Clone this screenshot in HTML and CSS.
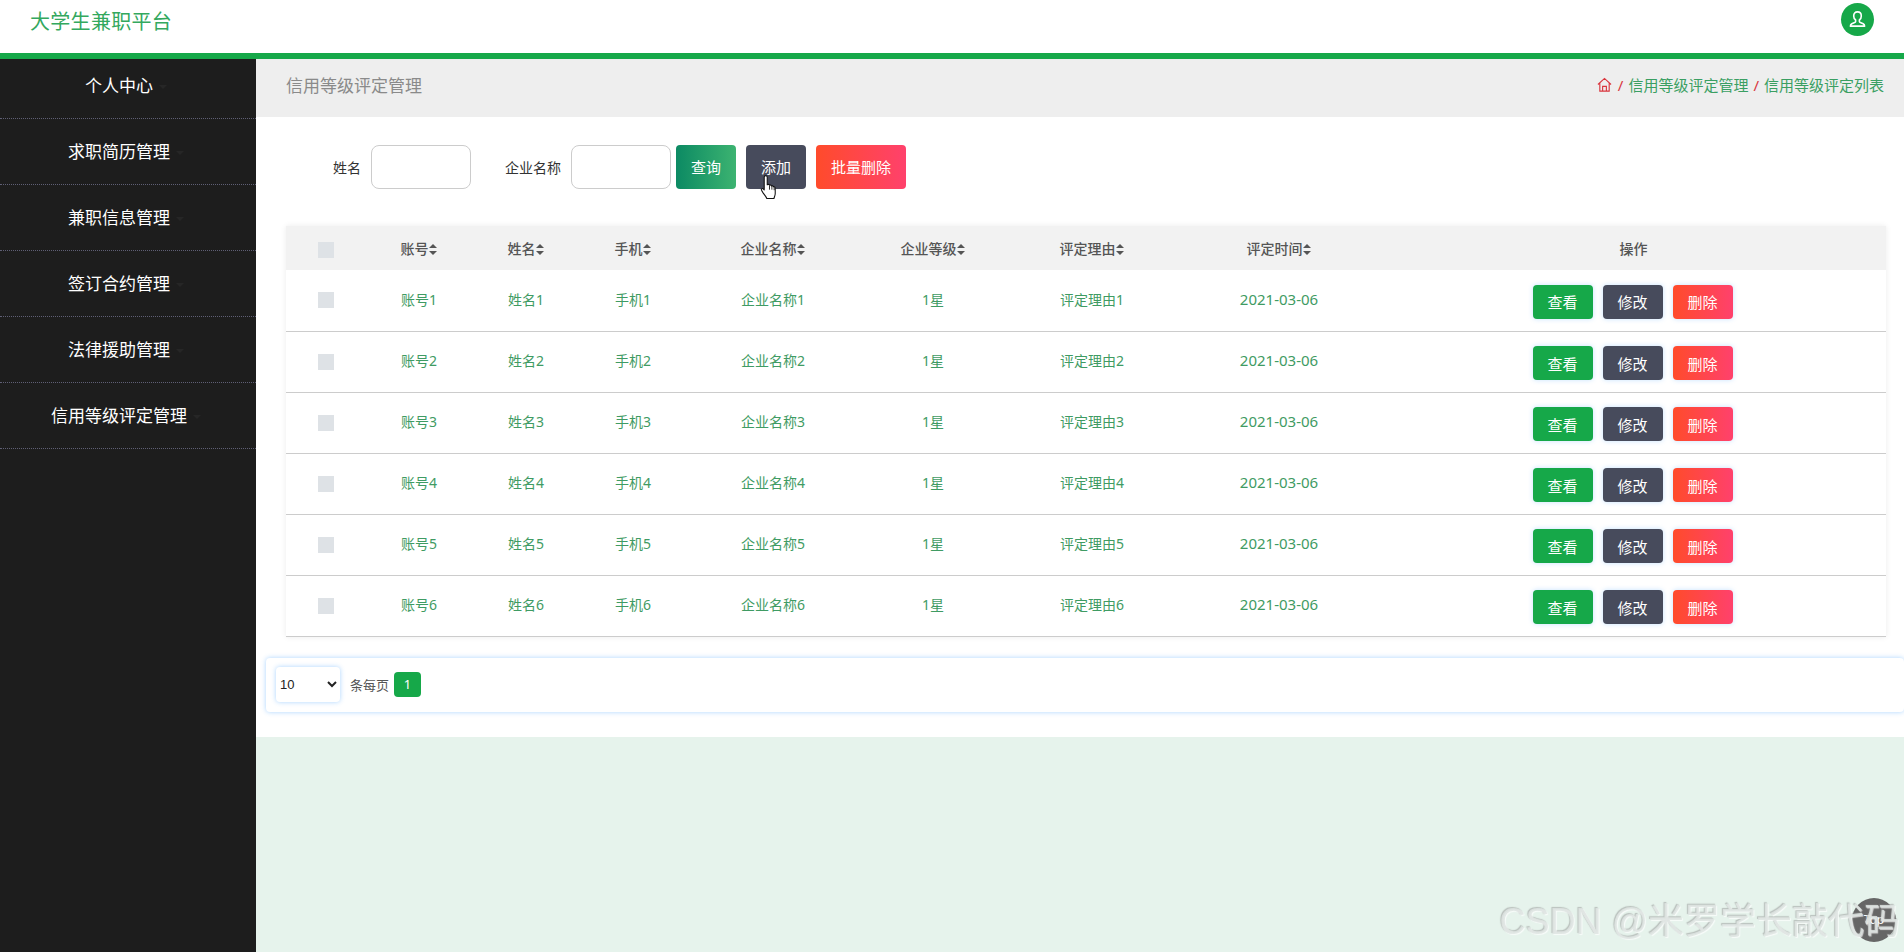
FILE: index.html
```html
<!DOCTYPE html>
<html lang="zh">
<head>
  <meta charset="UTF-8">
  <title>大学生兼职平台</title>
  <link rel="stylesheet" href="styles.css">
</head>
<body>
  <!-- 顶部 -->
  <header class="topbar">
    <div class="logo">大学生兼职平台</div>
    <div class="avatar">
      <svg width="19" height="19" viewBox="0 0 20 20" fill="none" stroke="#fff" stroke-width="1.7" stroke-linejoin="round"><path d="M10 2c-2.6 0-4 1.8-4 4.2 0 1.8.8 3.4 2 4.3v1.6c0 .5-.4.8-1 1.1l-3 1.3c-1 .5-1.5 1.3-1.5 2.5h15c0-1.2-.5-2-1.5-2.5l-3-1.3c-.6-.3-1-.6-1-1.1v-1.6c1.2-.9 2-2.5 2-4.3C14 3.800 12.600 2 10 2z"/></svg>
    </div>
  </header>

  <div class="layout">
    <!-- 左侧菜单 -->
    <nav class="sidebar">
      <a class="nav-item">个人中心</a>
      <a class="nav-item">求职简历管理</a>
      <a class="nav-item">兼职信息管理</a>
      <a class="nav-item">签订合约管理</a>
      <a class="nav-item">法律援助管理</a>
      <a class="nav-item">信用等级评定管理</a>
    </nav>

    <main class="main">
      <div class="crumb-bar">
        <div class="crumb-title">信用等级评定管理</div>
        <div class="crumbs">
          <svg class="home-icon" width="15" height="15" viewBox="0 0 16 16" fill="none" stroke="#d9363e" stroke-width="1.2"><path d="M1 8l7-6.500L15 8M3 6.500V15h10V6.500M6 15v-5h4v5"/></svg>
          <span class="sep">/</span><span>信用等级评定管理</span><span class="sep">/</span><span>信用等级评定列表</span>
        </div>
      </div>

      <section class="panel">
        <!-- 搜索 -->
        <div class="search">
          <label class="search-label">姓名</label>
          <input class="search-input" type="text">
          <label class="search-label second">企业名称</label>
          <input class="search-input" type="text">
          <button class="btn btn-query">查询</button>
          <button class="btn btn-add">添加</button>
          <button class="btn btn-batch">批量删除</button>
          <svg class="hand" width="19" height="27" viewBox="0 0 17 25"><path d="M5 1.500c.8 0 1.400.6 1.400 1.500v7l.6-.3c.7-.2 1.300.1 1.500.6.700-.3 1.500 0 1.700.7.800-.3 1.600 0 1.800.8.800-.3 1.800.2 1.800 1.200v5c0 2-.8 3-1.200 4.700H6c-.6-1.700-1.900-3-3.300-5L1.100 15c-.5-.9.500-2 1.500-1.300l1 1V3c0-.9.600-1.500 1.400-1.500z" fill="#fff" stroke="#111" stroke-width="1" stroke-linejoin="round"/><path d="M8.500 10.500v4M10.700 11v3.500M12.800 12v3" stroke="#111" stroke-width=".8"/></svg>
        </div>

        <div class="table-wrap">
          <table class="data-table">
            <colgroup>
              <col class="c-check"><col class="c-account"><col class="c-name"><col class="c-phone"><col class="c-company"><col class="c-level"><col class="c-reason"><col class="c-time"><col>
            </colgroup>
            <thead>
              <tr>
                <th><span class="check"></span></th>
                <th>账号<i class="sort"></i></th>
                <th>姓名<i class="sort"></i></th>
                <th>手机<i class="sort"></i></th>
                <th>企业名称<i class="sort"></i></th>
                <th>企业等级<i class="sort"></i></th>
                <th>评定理由<i class="sort"></i></th>
                <th>评定时间<i class="sort"></i></th>
                <th>操作</th>
              </tr>
            </thead>
            <tbody>
              <tr>
                <td><span class="check"></span></td><td>账号1</td><td>姓名1</td><td>手机1</td><td>企业名称1</td><td>1星</td><td>评定理由1</td><td class="date">2021-03-06</td>
                <td class="actions"><button class="btn-sm btn-view">查看</button><button class="btn-sm btn-edit">修改</button><button class="btn-sm btn-del">删除</button></td>
              </tr>
              <tr>
                <td><span class="check"></span></td><td>账号2</td><td>姓名2</td><td>手机2</td><td>企业名称2</td><td>1星</td><td>评定理由2</td><td class="date">2021-03-06</td>
                <td class="actions"><button class="btn-sm btn-view">查看</button><button class="btn-sm btn-edit">修改</button><button class="btn-sm btn-del">删除</button></td>
              </tr>
              <tr>
                <td><span class="check"></span></td><td>账号3</td><td>姓名3</td><td>手机3</td><td>企业名称3</td><td>1星</td><td>评定理由3</td><td class="date">2021-03-06</td>
                <td class="actions"><button class="btn-sm btn-view">查看</button><button class="btn-sm btn-edit">修改</button><button class="btn-sm btn-del">删除</button></td>
              </tr>
              <tr>
                <td><span class="check"></span></td><td>账号4</td><td>姓名4</td><td>手机4</td><td>企业名称4</td><td>1星</td><td>评定理由4</td><td class="date">2021-03-06</td>
                <td class="actions"><button class="btn-sm btn-view">查看</button><button class="btn-sm btn-edit">修改</button><button class="btn-sm btn-del">删除</button></td>
              </tr>
              <tr>
                <td><span class="check"></span></td><td>账号5</td><td>姓名5</td><td>手机5</td><td>企业名称5</td><td>1星</td><td>评定理由5</td><td class="date">2021-03-06</td>
                <td class="actions"><button class="btn-sm btn-view">查看</button><button class="btn-sm btn-edit">修改</button><button class="btn-sm btn-del">删除</button></td>
              </tr>
              <tr>
                <td><span class="check"></span></td><td>账号6</td><td>姓名6</td><td>手机6</td><td>企业名称6</td><td>1星</td><td>评定理由6</td><td class="date">2021-03-06</td>
                <td class="actions"><button class="btn-sm btn-view">查看</button><button class="btn-sm btn-edit">修改</button><button class="btn-sm btn-del">删除</button></td>
              </tr>
            </tbody>
          </table>
        </div>

        <!-- 分页 -->
        <div class="pager">
          <select class="page-size"><option>10</option></select>
          <span class="page-text">条每页</span>
          <span class="page-num">1</span>
        </div>
      </section>
    </main>
  </div>

  <div class="to-top">Top</div>
  <div class="watermark">CSDN @米罗学长敲代码</div>
</body>
</html>
```

FILE: styles.css
```css
* {
  box-sizing: border-box;
}
html, body {
  height: 100%;
}
body {
  margin: 0;
  font-family: "Noto Sans", "Noto Sans CJK SC", sans-serif;
  font-size: 14px;
  background: #e6f3ec;
  overflow: hidden;
  display: flex;
  flex-direction: column;
}

/* 顶部 */
.topbar {
  position: relative;
  z-index: 2;
  height: 59px;
  flex: none;
  background: #fff;
  border-bottom: 6px solid #16a849;
  display: flex;
  justify-content: space-between;
  padding: 0 30px;
}
.logo {
  font-size: 20px;
  letter-spacing: 0.3px;
  line-height: 44px;
  color: #33a85e;
}
.avatar {
  width: 33px;
  height: 33px;
  margin: 3px 0 0;
  margin-right: 0;
  border-radius: 50%;
  background: #16a849;
  display: flex;
  align-items: center;
  justify-content: center;
}

.layout {
  flex: 1;
  display: flex;
  min-height: 0;
}

/* 左侧菜单 */
.sidebar {
  width: 256px;
  flex: none;
  background: #1d1d1d;
  margin-top: -7px;
  padding-top: 1px;
}
.nav-item {
  display: block;
  height: 66px;
  line-height: 65px;
  padding-right: 4px;
  text-align: center;
  font-size: 17px;
  color: #fff;
  border-bottom: 1px dotted #5f5f75;
}
.nav-item::after {
  content: "";
  display: inline-block;
  margin-left: 6px;
  vertical-align: middle;
  border: 4px solid transparent;
  border-top-color: #262626;
  border-bottom: 0;
}

.main {
  flex: 1;
  min-width: 0;
}
.crumb-bar {
  height: 58px;
  background: #eee;
  display: flex;
  align-items: center;
  justify-content: space-between;
  padding: 0 20px 7px 30px;
}
.crumb-title {
  font-size: 17px;
  color: #8a8a8a;
}
.crumbs {
  display: flex;
  align-items: center;
  font-size: 15px;
  color: #3a9f62;
}
.home-icon {
  margin-right: 1px;
}
.sep {
  color: #d9363e;
  margin: 0 5px;
}

.panel {
  background: #fff;
  height: 620px;
  padding: 28px 18px 0 30px;
}

/* 搜索 */
.search {
  position: relative;
  display: flex;
  align-items: center;
  height: 44px;
  padding-left: 47px;
}
.search-label {
  margin-right: 10px;
  color: #333;
}
.search-label.second {
  margin-left: 34px;
}
.search-input {
  width: 100px;
  height: 44px;
  border: 1px solid #ccc;
  border-radius: 8px;
  background: #fff;
  outline: none;
}
.btn {
  height: 44px;
  width: 60px;
  margin-left: 10px;
  padding: 0 0 2px;
  border: 0;
  border-radius: 4px;
  color: #fff;
  font: inherit;
  font-size: 15px;
}
.btn-query {
  margin-left: 5px;
  background: linear-gradient(90deg, #0c8a63, #3cb371);
}
.btn-add {
  background: #474b5c;
}
.btn-batch {
  width: 90px;
  background: linear-gradient(90deg, #ff4b2b, #ff416c);
}
.hand {
  position: absolute;
  left: 474px;
  top: 29px;
}

/* 表格 */
.table-wrap {
  margin-top: 37px;
  box-shadow: 0 0 6px rgba(0, 0, 0, 0.08);
}
.data-table {
  width: 1600px;
  table-layout: fixed;
  border-collapse: collapse;
  text-align: center;
}
.c-check { width: 79px; }
.c-account { width: 108px; }
.c-name { width: 106px; }
.c-phone { width: 108px; }
.c-company { width: 172px; }
.c-level { width: 148px; }
.c-reason { width: 170px; }
.c-time { width: 204px; }

.data-table th {
  height: 44px;
  padding: 0;
  background: #f2f2f2;
  color: #555;
  font-weight: 500;
}
.data-table td {
  height: 61px;
  padding: 0 0 3px;
  color: #3f9b63;
  border-bottom: 1px solid #ccc;
}
.data-table td.date {
  font-size: 15px;
}
.check {
  display: inline-block;
  width: 16px;
  height: 16px;
  background: #dee2e6;
  vertical-align: middle;
}
.sort {
  position: relative;
  display: inline-block;
  width: 9px;
  height: 11px;
  vertical-align: -1px;
}
.sort::before,
.sort::after {
  content: "";
  position: absolute;
  left: 0;
  border: 4.5px solid transparent;
}
.sort::before {
  top: 0;
  border-top: 0;
  border-bottom-color: #555;
}
.sort::after {
  bottom: 0;
  border-bottom: 0;
  border-top-color: #555;
}

.data-table td.actions {
  padding: 3px 2px 0 0;
  font-size: 0;
}
.btn-sm {
  width: 60px;
  height: 34px;
  margin: 0 5px;
  padding: 0;
  border: 0;
  border-radius: 4px;
  color: #fff;
  font: 15px "Noto Sans", "Noto Sans CJK SC", sans-serif;
  box-shadow: 0 0 5px rgba(64, 158, 255, 0.3);
}
.btn-view {
  background: #16a849;
}
.btn-edit {
  background: #474b5c;
}
.btn-del {
  background: linear-gradient(90deg, #ff4b2b, #ff416c);
}

/* 分页 */
.pager {
  display: flex;
  align-items: center;
  height: 54px;
  margin: 21px -18px 0 -20px;
  padding-left: 10px;
  border-radius: 4px;
  box-shadow: 0 0 5px rgba(64, 158, 255, 0.45);
}
.page-size {
  width: 64px;
  height: 35px;
  padding-left: 0;
  border: 0;
  border-radius: 4px;
  background-color: #fff;
  font: 13px "Liberation Sans", sans-serif;
  color: #222;
  box-shadow: 0 0 5px rgba(64, 158, 255, 0.45);
}
.page-text {
  margin: 0 5px 0 10px;
  font-size: 13px;
  color: #555;
}
.page-num {
  width: 27px;
  height: 25px;
  line-height: 25px;
  border-radius: 4px;
  background: #16a849;
  color: #fff;
  font-size: 13px;
  text-align: center;
}

.to-top {
  position: fixed;
  right: 8px;
  bottom: 10px;
  width: 44px;
  height: 44px;
  line-height: 44px;
  border-radius: 50%;
  background: #666;
  color: #fff;
  font-size: 12px;
  text-align: center;
}
.watermark {
  position: fixed;
  right: 4px;
  bottom: 8px;
  font-family: "Liberation Sans", "Noto Sans CJK SC", sans-serif;
  font-size: 36px;
  line-height: 44px;
  white-space: nowrap;
  color: rgba(222, 228, 226, 0.85);
  text-shadow: 1px 1px 1px rgba(255, 255, 255, 0.7), -1px -1px 1px rgba(130, 130, 130, 0.45);
}
```
